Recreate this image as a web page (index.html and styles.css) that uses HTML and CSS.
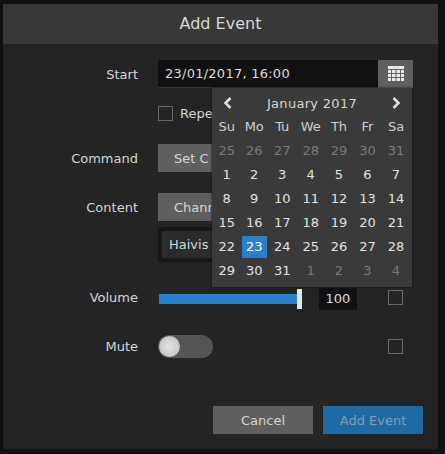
FILE: index.html
```html
<!DOCTYPE html>
<html lang="en">
<head>
  <meta charset="UTF-8">
  <title>Add Event</title>
  <link rel="stylesheet" href="styles.css">
</head>
<body>
  <div class="modal">
    <div class="modal-head">Add Event</div>

    <div class="modal-body">
      <div class="row row-start">
        <label class="row-label">Start</label>
        <div class="date-field">
          <div class="date-input">23/01/2017, 16:00</div>
          <button class="date-btn">
            <svg width="16" height="16" viewBox="0 0 16 16">
              <path fill="#e8e8e8" d="M0 0h16v3H0zM0 4h3v3H0zM4 4h3.500v3H4zM8.500 4H12v3H8.500zM13 4h3v3h-3zM0 8h3v3H0zM4 8h3.500v3H4zM8.500 8H12v3H8.500zM13 8h3v3h-3zM0 12h3v3H0zM4 12h3.500v3H4zM8.500 12H12v3H8.500zM13 12h3v3h-3z"/>
            </svg>
          </button>
        </div>
      </div>

      <div class="row row-repeat">
        <div class="row-label"></div>
        <span class="check"></span>
        <span class="check-text">Repe</span>
      </div>

      <div class="row row-command">
        <label class="row-label">Command</label>
        <button class="btn btn-select">Set C</button>
      </div>

      <div class="row row-content">
        <label class="row-label">Content</label>
        <button class="btn btn-select">Chann</button>
      </div>

      <div class="row row-source">
        <div class="row-label"></div>
        <div class="source-box"><span class="source-item">Haivis</span></div>
      </div>

      <div class="row row-volume">
        <label class="row-label label-volume">Volume</label>
        <div class="slider">
          <div class="slider-fill"></div>
          <div class="slider-thumb"></div>
        </div>
        <div class="volume-value">100</div>
        <span class="check check-end"></span>
      </div>

      <div class="row row-mute">
        <label class="row-label">Mute</label>
        <div class="toggle"><div class="toggle-knob"></div></div>
        <span class="check check-end-mute"></span>
      </div>

      <div class="modal-foot">
        <button class="btn btn-foot">Cancel</button>
        <button class="btn btn-foot btn-primary">Add Event</button>
      </div>
    </div>

    <div class="cal">
      <div class="cal-head">
        <svg class="cal-arrow" width="10" height="12" viewBox="0 0 10 12"><path d="M7.500 1 2.500 6l5 5" fill="none" stroke="#ddd" stroke-width="2.600"/></svg>
        <span class="cal-title">January 2017</span>
        <svg class="cal-arrow" width="10" height="12" viewBox="0 0 10 12"><path d="M2.500 1l5 5-5 5" fill="none" stroke="#ddd" stroke-width="2.600"/></svg>
      </div>
      <div class="cal-grid" id="calGrid"></div>
    </div>
  </div>

  <script>
    const dias = ["Su", "Mo", "Tu", "We", "Th", "Fr", "Sa"];
    const grid = document.getElementById("calGrid");

    function addCell(text, clase) {
      const cell = document.createElement("div");
      cell.className = "cal-cell " + clase;
      cell.textContent = text;
      grid.appendChild(cell);
    }

    dias.forEach(d => addCell(d, "cal-dow"));
    for (let i = 25; i <= 31; i++) addCell(i, "cal-off");
    for (let i = 1; i <= 31; i++) addCell(i, i === 23 ? "cal-sel" : "");
    for (let i = 1; i <= 4; i++) addCell(i, "cal-off");
  </script>
</body>
</html>
```

FILE: styles.css
```css
body {
  margin: 0;
  padding: 4px 7px 5px 3px;
  background-color: #111;
  font-family: "DejaVu Sans", sans-serif;
  font-size: 13px;
  color: #d6d6d6;
}

button {
  font-family: inherit;
  font-size: 13px;
  border: none;
  padding: 0;
}

.modal {
  position: relative;
  width: 435px;
  height: 445px;
  background-color: #242424;
}

.modal-head {
  height: 40px;
  line-height: 40px;
  text-align: center;
  font-size: 16px;
  background-color: #383838;
  color: #d8d8d8;
}

.modal-body {
  padding-top: 16px;
}

.row {
  display: flex;
  align-items: center;
  padding-right: 25px;
}

.row-label {
  flex: none;
  width: 135px;
  margin-right: 20px;
  text-align: right;
}

.label-volume {
  margin-bottom: 3px;
}

.row-start { height: 28px; }
.row-repeat { height: 14px; margin-top: 18px; }
.row-command { height: 28px; margin-top: 24px; }
.row-content { height: 28px; margin-top: 21px; }
.row-source { height: 35px; margin-top: 6px; }
.row-volume { height: 22px; margin-top: 26px; }
.row-mute { height: 23px; margin-top: 25px; }

.date-field {
  display: flex;
  width: 255px;
  height: 28px;
}

.date-input {
  flex: 1;
  height: 27px;
  line-height: 27px;
  padding-left: 7px;
  letter-spacing: 0.25px;
  background-color: #111;
  border-bottom: 1px solid #333;
  color: #dcdcdc;
}

.date-btn {
  display: flex;
  align-items: center;
  justify-content: center;
  width: 35px;
  background-color: #5f5f5f;
}

.check {
  flex: none;
  box-sizing: border-box;
  width: 15px;
  height: 15px;
  border: 1px solid #6a6a6a;
}

.check-text {
  margin-left: 7px;
}

.btn {
  height: 28px;
  background-color: #5f5f5f;
  color: #d6d6d6;
}

.btn-select {
  width: 70px;
  text-align: left;
  padding-left: 16px;
  white-space: nowrap;
}

.source-box {
  width: 54px;
  height: 35px;
  padding: 4px 0 4px 4px;
  box-sizing: border-box;
  background-color: #181818;
}

.source-item {
  display: block;
  height: 27px;
  line-height: 27px;
  padding-left: 7px;
  white-space: nowrap;
  background-color: #2c2c2c;
}

.slider {
  position: relative;
  width: 144px;
  height: 10px;
}

.slider-fill {
  height: 10px;
  margin-left: 1px;
  margin-right: 5px;
  background-color: #2a80cc;
}

.slider-thumb {
  position: absolute;
  top: -5px;
  right: 0;
  width: 5px;
  height: 20px;
  background-color: #e6e6e6;
}

.volume-value {
  box-sizing: border-box;
  width: 38px;
  height: 22px;
  line-height: 22px;
  margin-left: 17px;
  text-align: center;
  background-color: #111;
  color: #dcdcdc;
}

.check-end {
  margin-left: 31px;
  margin-bottom: 3px;
}

.check-end-mute {
  margin-left: 175px;
}

.toggle {
  position: relative;
  flex: none;
  width: 55px;
  height: 23px;
  border-radius: 12px;
  background-color: #555;
}

.toggle-knob {
  position: absolute;
  top: 1px;
  left: 1px;
  width: 21px;
  height: 21px;
  border-radius: 50%;
  background: radial-gradient(circle, #e4e4e4 0%, #cfcfcf 55%, #a8a8a8 100%);
}

.modal-foot {
  display: flex;
  justify-content: flex-end;
  gap: 10px;
  margin-top: 48px;
  padding-right: 15px;
}

.btn-foot {
  width: 100px;
}

.btn-primary {
  background-color: #1f6aa5;
  color: #7f9fb8;
}

.cal {
  position: absolute;
  top: 84px;
  left: 209px;
  box-sizing: border-box;
  width: 200px;
  height: 199px;
  padding: 3px 1px 0;
  background-color: #3a3a3a;
  box-shadow: 0 0 2px #111;
}

.cal-head {
  display: flex;
  align-items: center;
  justify-content: space-between;
  height: 24px;
  padding: 0 10px;
}

.cal-title {
  letter-spacing: 0.3px;
}

.cal-grid {
  display: grid;
  grid-template-columns: 27.5px 27.5px 28.5px 28.5px 28px 29px 28px;
  grid-auto-rows: 24px;
}

.cal-cell {
  margin: 1px;
  line-height: 22px;
  text-align: center;
  color: #e2e2e2;
}

.cal-dow {
  color: #d0d0d0;
}

.cal-off {
  color: #7a7a7a;
}

.cal-sel {
  background-color: #2a80cc;
  color: #fff;
}
```
